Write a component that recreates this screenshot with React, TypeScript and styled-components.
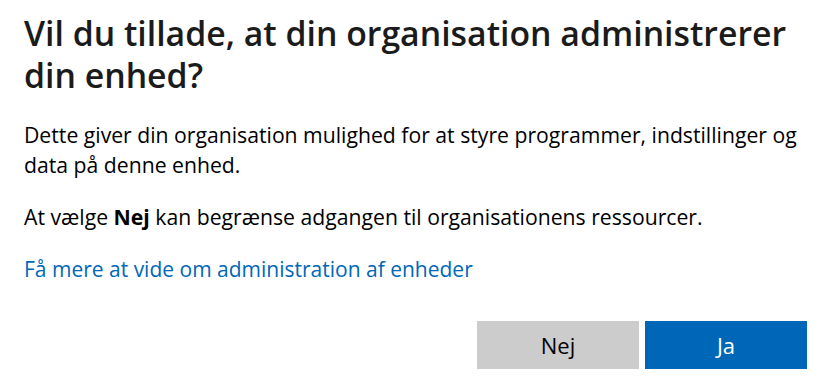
import React from "react";
import styled, { createGlobalStyle } from "styled-components";

const Global = createGlobalStyle`
  html, body { margin: 0; padding: 0; background: #ffffff; }
  body { font-family: "Segoe UI", "Open Sans", "Noto Sans", sans-serif; }
`;

const Dialog = styled.div`
  width: 836px;
  height: 392px;
  box-sizing: border-box;
  padding: 12px 29px 0 24px;
  display: flex;
  flex-direction: column;
  background: #ffffff;
`;

const Title = styled.h1`
  margin: 0;
  font-size: 33.8px;
  line-height: 42px;
  font-weight: 600;
  color: #1b1b1b;
`;

const Paragraph = styled.p`
  margin: 0;
  font-size: 21.2px;
  line-height: 30px;
  color: #000000;
`;

const Body = styled.div`
  display: flex;
  flex-direction: column;
  gap: 22px;
  margin-top: 24px;
`;

const Link = styled.a`
  font-size: 21px;
  line-height: 30px;
  color: #0067b8;
  text-decoration: none;
`;

const Actions = styled.div`
  display: flex;
  justify-content: flex-end;
  gap: 6px;
  margin-top: 37px;
`;

const Button = styled.button<{ $primary?: boolean }>`
  width: 162px;
  height: 48px;
  border: none;
  padding: 0;
  font-family: inherit;
  font-size: 22px;
  background: ${(p) => (p.$primary ? "#0067b8" : "#cccccc")};
  color: ${(p) => (p.$primary ? "#ffffff" : "#000000")};
  cursor: pointer;
`;

export default function App() {
  return (
    <>
      <Global />
      <Dialog>
        <Title>Vil du tillade, at din organisation administrerer din enhed?</Title>
        <Body>
          <Paragraph>
            Dette giver din organisation mulighed for at styre programmer, indstillinger og data på denne enhed.
          </Paragraph>
          <Paragraph>
            At vælge <b>Nej</b> kan begrænse adgangen til organisationens ressourcer.
          </Paragraph>
          <Link href="#">Få mere at vide om administration af enheder</Link>
        </Body>
        <Actions>
          <Button>Nej</Button>
          <Button $primary>Ja</Button>
        </Actions>
      </Dialog>
    </>
  );
}
